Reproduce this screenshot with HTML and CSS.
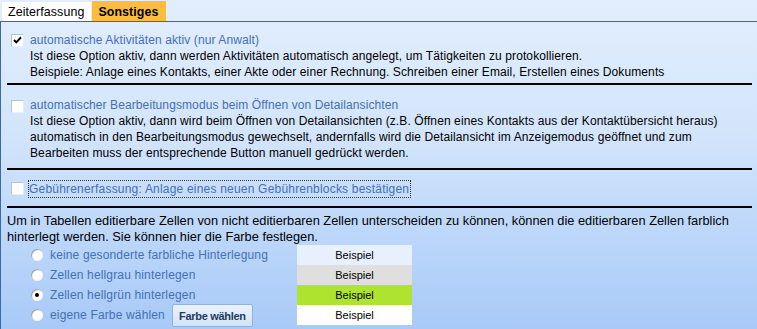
FILE: index.html
```html
<!DOCTYPE html>
<html lang="de">
<head>
<meta charset="utf-8">
<link rel="stylesheet" href="styles.css">
</head>
<body>
<div class="tabs">
  <div class="tab">Zeiterfassung</div>
  <div class="tab active">Sonstiges</div>
</div>
<div class="panel">
  <div class="opt opt1">
    <span class="cb"><svg width="11" height="11" viewBox="0 0 11 11"><path d="M2 5 L4.3 7.4 L9 2.3" fill="none" stroke="#000" stroke-width="2"/></svg></span>
    <div class="opt-text">
      <div class="label">automatische Aktivitäten aktiv (nur Anwalt)</div>
      <div>Ist diese Option aktiv, dann werden Aktivitäten automatisch angelegt, um Tätigkeiten zu protokollieren.</div>
      <div>Beispiele: Anlage eines Kontakts, einer Akte oder einer Rechnung. Schreiben einer Email, Erstellen eines Dokuments</div>
    </div>
  </div>
  <div class="sep sep1"></div>
  <div class="opt opt2">
    <span class="cb"></span>
    <div class="opt-text">
      <div class="label">automatischer Bearbeitungsmodus beim Öffnen von Detailansichten</div>
      <div>Ist diese Option aktiv, dann wird beim Öffnen von Detailansichten (z.B. Öffnen eines Kontakts aus der Kontaktübersicht heraus)</div>
      <div>automatisch in den Bearbeitungsmodus gewechselt, andernfalls wird die Detailansicht im Anzeigemodus geöffnet und zum</div>
      <div>Bearbeiten muss der entsprechende Button manuell gedrückt werden.</div>
    </div>
  </div>
  <div class="sep sep2"></div>
  <div class="opt opt3">
    <span class="cb"></span>
    <div class="opt-text">
      <span class="label focus">Gebührenerfassung: Anlage eines neuen Gebührenblocks bestätigen</span>
    </div>
  </div>
  <div class="sep sep3"></div>
  <p class="intro">Um in Tabellen editierbare Zellen von nicht editierbaren Zellen unterscheiden zu können, können die editierbaren Zellen farblich<br>hinterlegt werden. Sie können hier die Farbe festlegen.</p>
  <div class="colors">
    <div class="radio-row"><span class="rb"></span><span class="label">keine gesonderte farbliche Hinterlegung</span></div>
    <div class="swatch sw-none">Beispiel</div>
    <div class="radio-row"><span class="rb"></span><span class="label">Zellen hellgrau hinterlegen</span></div>
    <div class="swatch sw-grey">Beispiel</div>
    <div class="radio-row"><span class="rb on"></span><span class="label">Zellen hellgrün hinterlegen</span></div>
    <div class="swatch sw-green">Beispiel</div>
    <div class="radio-row"><span class="rb"></span><span class="label">eigene Farbe wählen</span><button class="btn">Farbe wählen</button></div>
    <div class="swatch sw-white">Beispiel</div>
  </div>
</div>
</body>
</html>
```
FILE: styles.css
```css
* { box-sizing: border-box; }
html, body { margin: 0; height: 100%; }
body {
  font-family: "Liberation Sans", Arial, sans-serif;
  font-size: 12px;
  letter-spacing: 0.1px;
  line-height: 16px;
  color: #000;
  background: linear-gradient(to bottom, #e2eefd 0%, #d3e5fb 40%, #a8caf8 100%);
  overflow: hidden;
  white-space: nowrap;
}
.tabs {
  display: flex;
  align-items: flex-end;
  height: 22px;
  padding-left: 2px;
  border-bottom: 1px solid #3a6aa3;
}
.tab {
  height: 19px;
  padding: 2px 7px 0 6px;
  background: #fff;
  line-height: 17px;
  font-size: 12.4px;
}
.tab.active {
  height: 20px;
  margin-left: 1px;
  padding: 3px 7px 0 6px;
  background: #fbbd3c;
  font-weight: bold;
}
.panel {
  border-left: 1px solid #3a6aa3;
  padding: 10px 5px 0 6px;
  height: calc(100% - 22px);
}
.opt {
  display: flex;
  gap: 6px;
  padding-left: 4px;
}
.cb {
  flex: none;
  width: 13px;
  height: 13px;
  margin-top: 3px;
  background: #fff;
  border: 1px solid #b6c2d6;
  border-right-color: #e8eef8;
  border-bottom-color: #e8eef8;
  display: flex;
  align-items: center;
  justify-content: center;
}
.opt1 .cb { margin-top: 2px; }
.label { color: #4470b4; }
.sep { height: 2px; background: #000; }
.sep1 { margin-top: 3px; }
.opt2 { margin-top: 12px; }
.sep2 { margin-top: 7px; }
.opt3 { margin-top: 10px; }
.opt3 .cb { margin-top: 2px; }
.focus {
  display: inline-block;
  border: 1px dotted #333;
  padding: 0 1px 0 0;
  margin-left: -2px;
  line-height: 16px;
  letter-spacing: 0.2px;
}
.sep3 { margin-top: 8px; }
.intro {
  margin: 5px 0 0 0;
  font-size: 12.8px;
  letter-spacing: 0;
}
.colors {
  display: grid;
  grid-template-columns: 290px 115px;
  grid-auto-rows: 20px;
}
.radio-row {
  display: flex;
  align-items: center;
  padding-left: 24px;
  gap: 7px;
  letter-spacing: 0.15px;
}
.rb {
  flex: none;
  width: 12px;
  height: 12px;
  margin-top: -1px;
  border-radius: 50%;
  background: #fff;
  box-shadow: inset 1px 1px 1px #9c9c9c, inset -1px -1px 0 #f4f4f4;
  position: relative;
}
.rb.on::after {
  content: "";
  position: absolute;
  left: 4px;
  top: 4px;
  width: 4px;
  height: 4px;
  border-radius: 50%;
  background: #000;
}
.swatch {
  text-align: center;
  line-height: 20px;
  font-size: 11px;
  letter-spacing: 0;
}
.sw-none { background: #e8f0fe; }
.sw-grey { background: #dfdfdf; }
.sw-green { background: #aee330; }
.sw-white { background: #fff; }
.btn {
  height: 23px;
  width: 81px;
  padding: 0;
  font-family: "Liberation Sans", Arial, sans-serif;
  font-size: 11px;
  letter-spacing: -0.3px;
  font-weight: bold;
  color: #233a5e;
  background: linear-gradient(to bottom, #e9f2fd, #d3e4f9);
  border: 1px solid #8db2e2;
  border-radius: 2px;
  align-self: flex-end;
  margin-bottom: -2px;
}
```
